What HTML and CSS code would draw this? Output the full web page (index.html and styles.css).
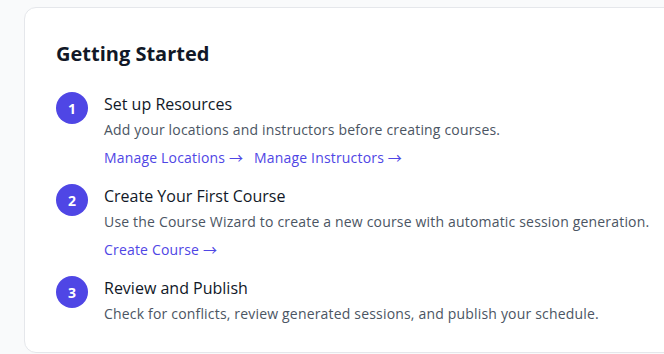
FILE: index.html
```html
<!DOCTYPE html>
<html lang="en">
<head>
<meta charset="utf-8">
<link rel="stylesheet" href="styles.css">
</head>
<body>
<div class="page">
  <section class="card">
    <h2 class="card-title">Getting Started</h2>
    <ol class="steps">
      <li class="step">
        <span class="badge">1</span>
        <div class="step-body">
          <h3 class="step-title">Set up Resources</h3>
          <p class="step-desc">Add your locations and instructors before creating courses.</p>
          <div class="links">
            <a class="link" href="#">Manage Locations <span class="arrow">→</span></a>
            <a class="link" href="#">Manage Instructors <span class="arrow">→</span></a>
          </div>
        </div>
      </li>
      <li class="step">
        <span class="badge">2</span>
        <div class="step-body">
          <h3 class="step-title">Create Your First Course</h3>
          <p class="step-desc">Use the Course Wizard to create a new course with automatic session generation.</p>
          <div class="links">
            <a class="link" href="#">Create Course <span class="arrow">→</span></a>
          </div>
        </div>
      </li>
      <li class="step">
        <span class="badge">3</span>
        <div class="step-body">
          <h3 class="step-title">Review and Publish</h3>
          <p class="step-desc">Check for conflicts, review generated sessions, and publish your schedule.</p>
        </div>
      </li>
    </ol>
  </section>
</div>
</body>
</html>
```

FILE: styles.css
```css
* { box-sizing: border-box; }
html, body { margin: 0; padding: 0; }
body {
  background: #f9fafb;
  font-family: "Open Sans", "Noto Sans", sans-serif;
  color: #111827;
  overflow: hidden;
}
.page {
  padding: 7px 0 0 24px;
}
.card {
  width: 660px;
  background: #ffffff;
  border: 1px solid #e5e7eb;
  border-radius: 12px;
  padding: 32px 32px 28px 31px;
}
.card-title {
  margin: 0 0 24px 0;
  font-size: 20px;
  line-height: 28px;
  font-weight: 700;
  color: #111827;
}
.steps {
  list-style: none;
  margin: 0;
  padding: 0;
  display: flex;
  flex-direction: column;
  gap: 16px;
}
.step {
  display: flex;
  align-items: flex-start;
  gap: 16px;
}
.badge {
  flex: none;
  width: 32px;
  height: 32px;
  border-radius: 50%;
  background: #4f46e5;
  color: #ffffff;
  font-size: 14px;
  font-weight: 700;
  display: flex;
  align-items: center;
  justify-content: center;
}
.step-body {
  white-space: nowrap;
}
.step-title {
  margin: 0;
  font-size: 16px;
  line-height: 24px;
  font-weight: 400;
  color: #111827;
}
.step-desc {
  margin: 4px 0 0 0;
  font-size: 14px;
  line-height: 20px;
  letter-spacing: 0.18px;
  color: #4b5563;
}
.links {
  margin-top: 8px;
  display: flex;
  gap: 11px;
  height: 20px;
}
.link {
  display: block;
  height: 20px;
  font-size: 14px;
  line-height: 20px;
  letter-spacing: 0.18px;
  color: #4f46e5;
  text-decoration: none;
}
.arrow {
  font-family: "Noto Sans CJK SC", sans-serif;
  letter-spacing: 0;
  line-height: 1;
}
```
